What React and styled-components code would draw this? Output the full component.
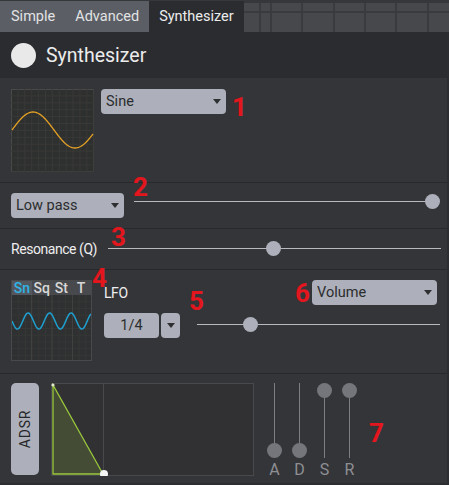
import React from "react";
import styled, { createGlobalStyle } from "styled-components";

const Global = createGlobalStyle`
  html, body { margin: 0; padding: 0; background: #2c2d31; }
  body { font-family: Roboto, "Noto Sans", sans-serif; }
  * { box-sizing: border-box; }
`;

const Page = styled.div`
  position: relative;
  width: 449px;
  height: 485px;
  overflow: hidden;
  background: #2c2d31;
`;

const TabBar = styled.div`
  display: flex;
  height: 32px;
  padding-top: 1px;
  background-color: #46484c;
  background-image:
    linear-gradient(to bottom, #36373b 0 3px, transparent 3px),
    linear-gradient(to bottom, transparent 11px, #3a3b3f 11px, #3a3b3f 13px, transparent 13px),
    repeating-linear-gradient(to right, #3a3b3f 0 2px, transparent 2px 31.3px);
  background-position: 0 0, 0 0, 270px 0;
`;

const Tab = styled.div`
  padding: 0 10px;
  line-height: 31px;
  font-size: 14.5px;
  color: ${(p) => (p.$active ? "#ececec" : "#e2e3e5")};
  background: ${(p) => (p.$active ? "#2b2c30" : "#5b5e64")};
  &:first-child { padding-left: 11px; }
`;

const Panel = styled.div`
  width: 447px;
  background: #343539;
`;

const Header = styled.div`
  display: flex;
  align-items: center;
  gap: 10px;
  height: 46px;
  padding-left: 11px;
  background: #2b2c30;
`;

const Dot = styled.div`
  width: 25px;
  height: 25px;
  border-radius: 50%;
  background: #e9e9e9;
`;

const Title = styled.div`
  font-size: 19.5px;
  color: #ececec;
`;

const Section = styled.div`
  display: flex;
  align-items: ${(p) => p.$align || "flex-start"};
  height: ${(p) => p.$h}px;
  padding: ${(p) => p.$pad || "0"};
  border-top: ${(p) => (p.$first ? "none" : "1px solid #28292c")};
`;

const Screen = styled.svg`
  display: block;
  flex: none;
`;

const Select = styled.div`
  display: flex;
  align-items: center;
  justify-content: space-between;
  flex: none;
  width: ${(p) => p.$w}px;
  height: 25px;
  padding: 0 5px 0 5px;
  margin-left: ${(p) => p.$ml || 0}px;
  margin-right: ${(p) => p.$mr || 0}px;
  border-radius: 4px;
  background: #adb0ba;
  color: #2b2c2e;
  font-size: 14.5px;
`;

const Caret = styled.span`
  width: 0;
  height: 0;
  border-left: 4.5px solid transparent;
  border-right: 4.5px solid transparent;
  border-top: 5px solid #2e2f31;
`;

const SliderWrap = styled.div`
  position: relative;
  flex: 1;
  height: 15px;
  margin-left: ${(p) => p.$ml || 0}px;
  margin-right: ${(p) => p.$mr || 0}px;
  margin-bottom: ${(p) => p.$mb || 0}px;
  margin-top: ${(p) => p.$mt || 0}px;
`;

const TrackLine = styled.div`
  position: absolute;
  left: 0;
  right: 0;
  top: 7px;
  height: 1px;
  background: #b8bac0;
`;

const Thumb = styled.div`
  position: absolute;
  top: 0;
  width: 15px;
  height: 15px;
  margin-left: -7.5px;
  border-radius: 50%;
  background: #adb0ba;
`;

const Label = styled.div`
  font-size: 14px;
  font-weight: 400;
  letter-spacing: -0.45px;
  color: #eeeeee;
  white-space: nowrap;
`;

const Controls = styled.div`
  display: flex;
  flex-direction: column;
  flex: 1;
  gap: 8px;
  margin-left: 12px;
  padding-right: 7px;
`;

const Row = styled.div`
  display: flex;
  align-items: center;
  height: 25px;
`;

const Spacer = styled.div`
  flex: 1;
`;

const RateBtn = styled.div`
  display: flex;
  align-items: center;
  justify-content: center;
  flex: none;
  width: ${(p) => p.$w}px;
  height: 25px;
  margin-left: ${(p) => p.$ml || 0}px;
  border-radius: 4px;
  background: #adb0ba;
  color: #2b2c2e;
  font-size: 14.5px;
`;

const LfoBox = styled.div`
  display: flex;
  flex-direction: column;
  flex: none;
  width: 81px;
  height: 81px;
  border: 1px solid #48494b;
  background: #2f3031;
`;

const LfoTabs = styled.div`
  display: flex;
  height: 14px;
  background: #48494c;
`;

const LfoTab = styled.div`
  flex: 1;
  text-align: center;
  font-size: 14px;
  font-weight: 500;
  line-height: 14px;
  color: ${(p) => (p.$active ? "#2fb4e6" : "#d7d7d7")};
  background: ${(p) => (p.$active ? "#54585e" : "transparent")};
`;

const AdsrBtn = styled.div`
  display: flex;
  align-items: center;
  justify-content: center;
  flex: none;
  width: 28px;
  height: 92px;
  border-radius: 5px;
  background: #adb0ba;
`;

const Gap = styled.div`
  flex: none;
  width: ${(p) => p.$w}px;
`;

const VerticalText = styled.span`
  transform: rotate(-90deg);
  font-size: 14px;
  letter-spacing: 0.8px;
  color: #26272a;
  white-space: nowrap;
`;

const Faders = styled.div`
  display: flex;
  gap: 10px;
  margin-left: 13px;
`;

const Fader = styled.div`
  display: flex;
  flex-direction: column;
  align-items: center;
  width: 15px;
`;

const VTrack = styled.div`
  position: relative;
  width: 15px;
  height: 75px;
  &::before {
    content: "";
    position: absolute;
    left: 7px;
    top: 0;
    bottom: 0;
    width: 1px;
    background: #7d7e83;
  }
`;

const VThumb = styled.div`
  position: absolute;
  left: 0;
  width: 15px;
  height: 15px;
  border-radius: 50%;
  background: #75767b;
`;

const FaderLabel = styled.div`
  margin-top: 4px;
  font-size: 16px;
  line-height: 16px;
  color: #8e8f93;
`;

const Marker = styled.div`
  position: absolute;
  left: ${(p) => p.$x}px;
  top: ${(p) => p.$y}px;
  font-size: 26px;
  font-weight: 700;
  line-height: 1;
  color: #e3161e;
`;

function sinePath(x0, x1, cy, amp, period, phase, sign) {
  let d = "";
  for (let x = x0; x <= x1; x += 0.5) {
    const y = cy + sign * amp * Math.sin((2 * Math.PI * (x - x0)) / period + phase);
    d += (x === x0 ? "M" : "L") + x.toFixed(2) + " " + y.toFixed(2) + " ";
  }
  return d;
}

function Grid({ w, h, step, color }) {
  const lines = [];
  for (let x = step; x < w; x += step) lines.push(<line key={"v" + x} x1={x} y1={0} x2={x} y2={h} stroke={color} strokeWidth="1" />);
  for (let y = step; y < h; y += step) lines.push(<line key={"h" + y} x1={0} y1={y} x2={w} y2={y} stroke={color} strokeWidth="1" />);
  return <g>{lines}</g>;
}

function WaveScreen() {
  return (
    <Screen width="83" height="83" viewBox="0 0 83 83">
      <rect x="0.5" y="0.5" width="82" height="82" fill="#2e2f2f" stroke="#4a4a48" />
      <Grid w={83} h={83} step={6.9} color="#393a37" />
      <path d={sinePath(1, 82, 41, 18, 84, 0, -1)} fill="none" stroke="#e4a126" strokeWidth="1.3" />
    </Screen>
  );
}

function LfoScreen() {
  return (
    <Screen width="79" height="65" viewBox="0 0 79 65">
      <Grid w={79} h={65} step={6.7} color="#363736" />
      {[19.5, 40, 60.5].map((x) => (
        <line key={x} x1={x} y1={0} x2={x} y2={65} stroke="#3f403f" strokeWidth="1" />
      ))}
      <path d={sinePath(0, 79, 26, 8, 21.5, 0, 1)} fill="none" stroke="#1f9fcf" strokeWidth="1.5" />
    </Screen>
  );
}

function EnvScreen() {
  return (
    <Screen width="203" height="93" viewBox="0 0 203 93">
      <rect x="0.5" y="0.5" width="202" height="92" fill="#313133" stroke="#48494c" />
      <line x1="52.5" y1="1" x2="52.5" y2="92" stroke="#48494c" strokeWidth="1" />
      <polygon points="2,2 2,91 52,91" fill="#454c36" stroke="#9ac83c" strokeWidth="1.3" />
      <circle cx="2" cy="2" r="1.6" fill="#dfe9c8" />
      <circle cx="53" cy="91" r="4" fill="#f4f4f4" />
    </Screen>
  );
}

function Slider({ pct, ...rest }) {
  return (
    <SliderWrap {...rest}>
      <TrackLine />
      <Thumb style={{ left: `${pct}%` }} />
    </SliderWrap>
  );
}

const faders = [
  { l: "A", top: 60 },
  { l: "D", top: 60 },
  { l: "S", top: 0 },
  { l: "R", top: 0 },
];

export default function App() {
  return (
    <>
      <Global />
      <Page>
        <TabBar>
          <Tab>Simple</Tab>
          <Tab>Advanced</Tab>
          <Tab $active>Synthesizer</Tab>
        </TabBar>
        <Panel>
          <Header>
            <Dot />
            <Title>Synthesizer</Title>
          </Header>

          <Section $first $h={104} $pad="11px 0 0 11px">
            <WaveScreen />
            <Select $w={125} $ml={7}>
              Sine
              <Caret />
            </Select>
          </Section>

          <Section $h={46} $align="center" $pad="0 7px 0 11px">
            <Select $w={113}>
              Low pass
              <Caret />
            </Select>
            <Slider pct={97.7} $ml={10} $mb={9} />
          </Section>

          <Section $h={41} $align="center" $pad="0 6px 0 11px">
            <Label>Resonance (Q)</Label>
            <Slider pct={49.7} $ml={11} $mb={2} />
          </Section>

          <Section $h={104} $pad="10px 0 0 11px">
            <LfoBox>
              <LfoTabs>
                <LfoTab $active>Sn</LfoTab>
                <LfoTab>Sq</LfoTab>
                <LfoTab>St</LfoTab>
                <LfoTab>T</LfoTab>
              </LfoTabs>
              <LfoScreen />
            </LfoBox>
            <Controls>
              <Row>
                <Label>LFO</Label>
                <Spacer />
                <Select $w={125} $mr={3}>
                  Volume
                  <Caret />
                </Select>
              </Row>
              <Row>
                <RateBtn $w={55}>1/4</RateBtn>
                <RateBtn $w={19} $ml={2}>
                  <Caret />
                </RateBtn>
                <Slider pct={22} $ml={17} $mb={3} />
              </Row>
            </Controls>
          </Section>

          <Section $h={110} $pad="9px 0 0 11px">
            <AdsrBtn>
              <VerticalText>ADSR</VerticalText>
            </AdsrBtn>
            <Gap $w={12} />
            <EnvScreen />
            <Faders>
              {faders.map((f) => (
                <Fader key={f.l}>
                  <VTrack>
                    <VThumb style={{ top: f.top }} />
                  </VTrack>
                  <FaderLabel>{f.l}</FaderLabel>
                </Fader>
              ))}
            </Faders>
          </Section>
        </Panel>

        <Marker $x={232} $y={94}>1</Marker>
        <Marker $x={133} $y={174}>2</Marker>
        <Marker $x={111} $y={224}>3</Marker>
        <Marker $x={92} $y={265}>4</Marker>
        <Marker $x={189} $y={288}>5</Marker>
        <Marker $x={295} $y={280}>6</Marker>
        <Marker $x={369} $y={420}>7</Marker>
      </Page>
    </>
  );
}
